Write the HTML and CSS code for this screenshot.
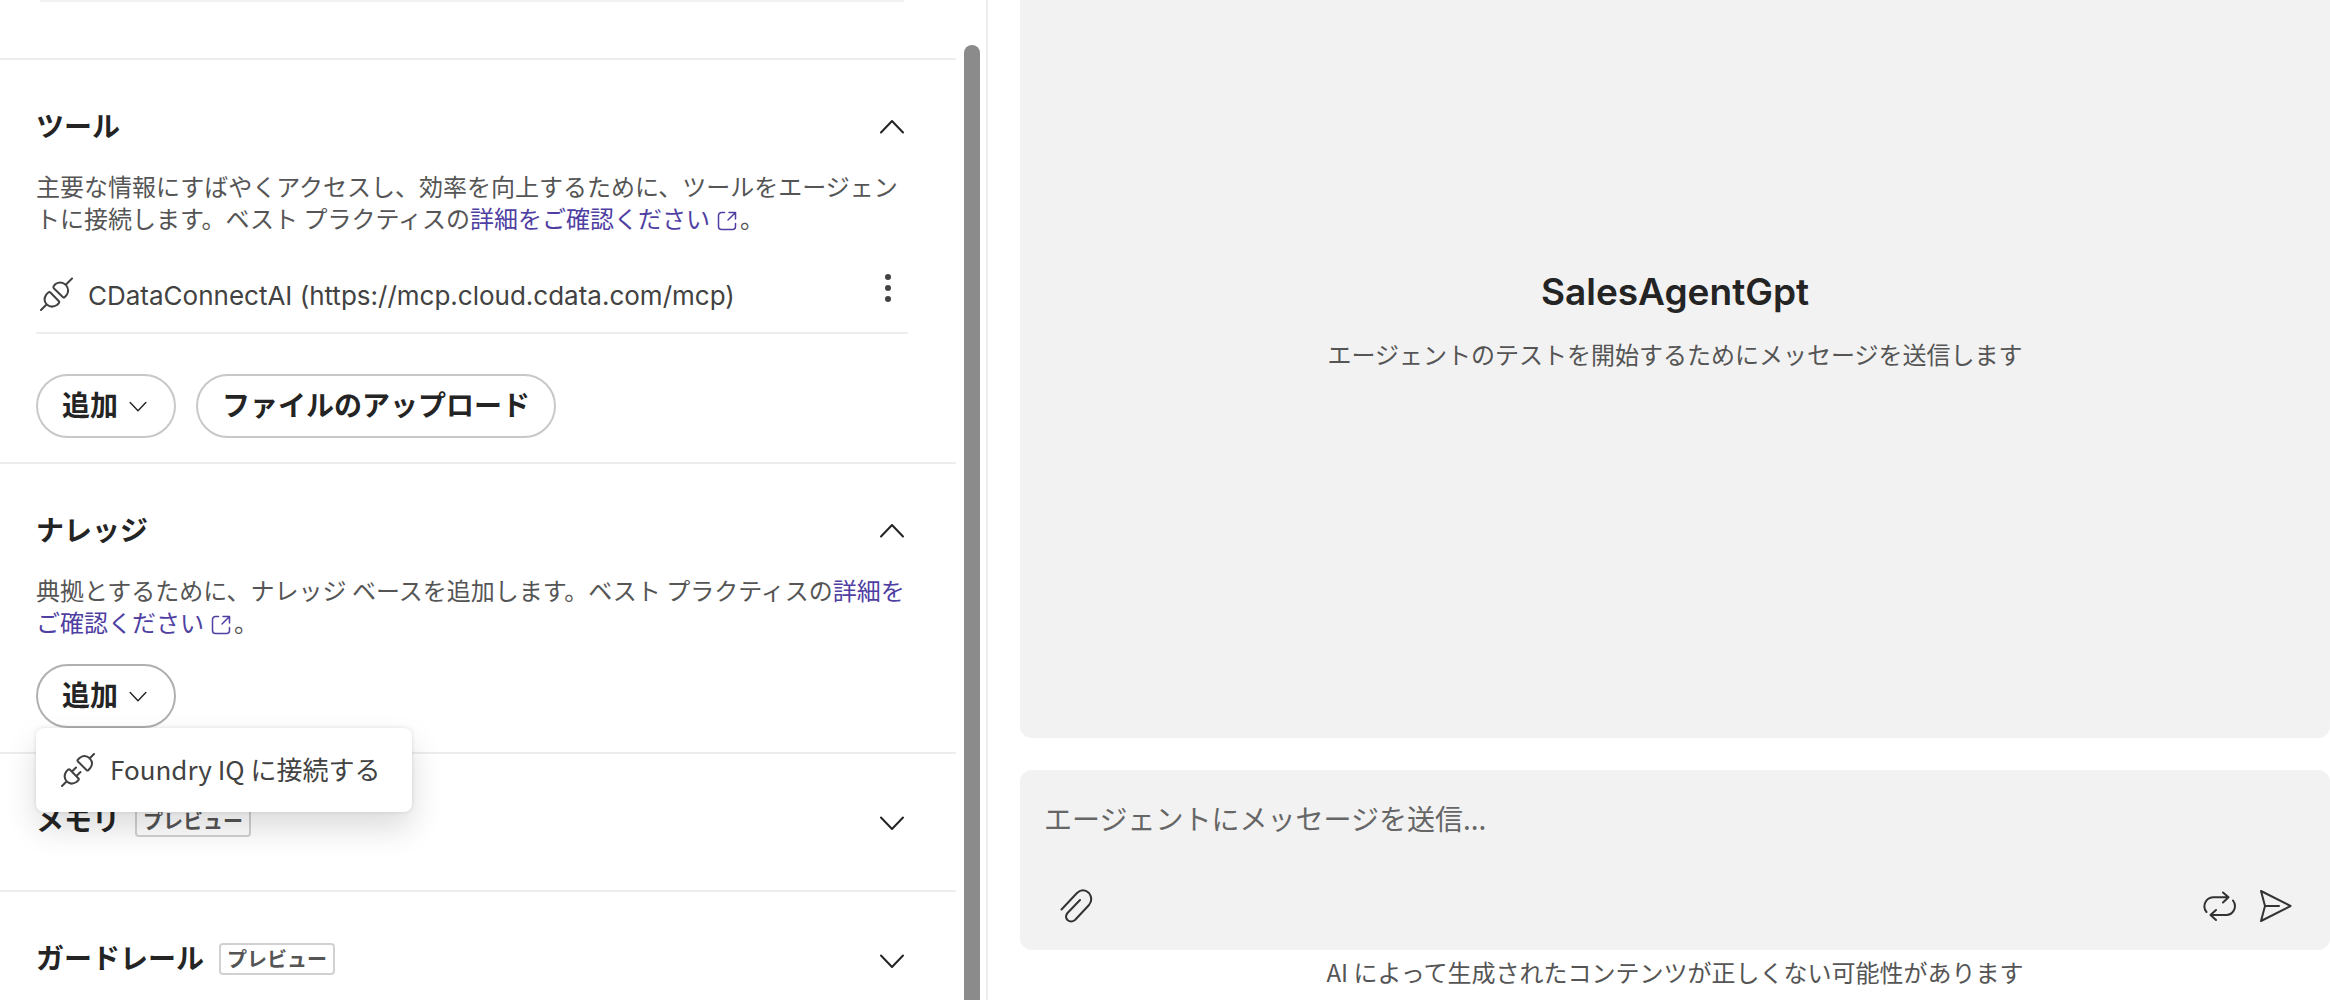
FILE: index.html
```html
<!DOCTYPE html>
<html lang="ja">
<head>
<meta charset="utf-8">
<title>SalesAgentGpt</title>
<link rel="stylesheet" href="styles.css">
</head>
<body>
<svg class="sprite" aria-hidden="true">
  <symbol id="chevron-up" viewBox="0 0 28 28"><path d="M3 19.500 14 8 25 19.500"/></symbol>
  <symbol id="chevron-down" viewBox="0 0 28 28"><path d="M3 10.500 14 22 25 10.500"/></symbol>
  <symbol id="open" viewBox="0 0 20 20"><path d="M7.500 1.500H4.500a3 3 0 0 0-3 3v11a3 3 0 0 0 3 3h11a3 3 0 0 0 3-3V12.500M12 1.500h6.500V8M18.500 1.500 11 9"/></symbol>
  <symbol id="plug-on" viewBox="0 0 34 34"><path d="M1 33 6 28M32 1.500 26.500 7M14 11.500 22.800 20Q23.800 21 24.800 20L26.500 18.300Q30 13 26 8Q21 3.500 15.500 7L13.900 8.800Q12.900 10.200 14 11.500ZM10.400 15.500 18.700 24Q19.700 25 18.700 26.200L17 28Q11.500 31.500 6.800 27.500Q2.500 23 6.400 17.400L8.200 15.600Q9.300 14.500 10.400 15.500Z"/></symbol>
  <symbol id="plug-off" viewBox="0 0 34 34"><path d="M1 33 5.500 28.500M33 1 28.500 5.500M17 8.500 25.500 17Q26.500 18 27.500 17L29.300 15Q33 10 28.800 5.300Q24 1 18.900 4.700L17 6.500Q16 7.500 17 8.500ZM9 16.800 17.300 25.200Q18.300 26.200 17.300 27.200L15.500 29Q10 32.500 5.800 28.500Q1.800 24 5.200 18.600L7 16.800Q8 15.800 9 16.800ZM11 18.500 15 14.500M15.500 23 19.500 19"/></symbol>
  <symbol id="clip" viewBox="0 0 36 36"><path d="M3.500 21.500 19 5Q25-.500 31 5Q35.500 11 31 17L17 32Q13 35 9.500 32Q6.500 28.500 9.500 25L22 12"/></symbol>
  <symbol id="repeat" viewBox="0 0 36 36"><path d="M4.500 24A9 9 0 0 1 11 9.300H26M21 4.500 26.500 9.300 21 14.500M31 12.500A9 9 0 0 1 25 27H9M14 22 8.500 27 14 32"/></symbol>
  <symbol id="send" viewBox="0 0 36 36"><path d="M3 3 32.500 18 3 33 7 18ZM7 18H21"/></symbol>
</svg>

<div class="app">
  <main class="setup">
    <div class="setup-body">
      <div class="previous"></div>

      <section class="section">
        <header class="section-head">
          <h2>ツール</h2>
          <button class="icon-button" type="button" aria-label="折りたたむ"><svg class="icon-md"><use href="#chevron-up"/></svg></button>
        </header>
        <p class="description">主要な情報にすばやくアクセスし、効率を向上するために、ツールをエージェントに接続します。ベスト プラクティスの<a href="#tools">詳細をご確認ください<svg class="icon-open"><use href="#open"/></svg></a>。</p>
        <div class="tool">
          <svg class="icon-lg"><use href="#plug-on"/></svg>
          <span class="tool-name">CDataConnectAI (https://mcp.cloud.cdata.com/mcp)</span>
          <button class="icon-button more" type="button" aria-label="その他"><span></span><span></span><span></span></button>
        </div>
        <div class="actions">
          <button class="pill" type="button">追加<svg class="icon-sm"><use href="#chevron-down"/></svg></button>
          <button class="pill" type="button">ファイルのアップロード</button>
        </div>
      </section>

      <section class="section">
        <header class="section-head">
          <h2>ナレッジ</h2>
          <button class="icon-button" type="button" aria-label="折りたたむ"><svg class="icon-md"><use href="#chevron-up"/></svg></button>
        </header>
        <p class="description">典拠とするために、ナレッジ ベースを追加します。ベスト プラクティスの<a href="#knowledge">詳細をご確認ください<svg class="icon-open"><use href="#open"/></svg></a>。</p>
        <div class="actions compact">
          <div class="dropdown">
            <button class="pill open" type="button" aria-expanded="true">追加<svg class="icon-sm"><use href="#chevron-down"/></svg></button>
            <div class="menu" role="menu">
              <button class="menu-item" type="button" role="menuitem"><svg class="icon-lg"><use href="#plug-off"/></svg><span>Foundry IQ に接続する</span></button>
            </div>
          </div>
        </div>
      </section>

      <section class="section">
        <header class="section-head">
          <h2>メモリ</h2><span class="badge">プレビュー</span>
          <button class="icon-button" type="button" aria-label="展開する"><svg class="icon-md"><use href="#chevron-down"/></svg></button>
        </header>
      </section>

      <section class="section">
        <header class="section-head">
          <h2>ガードレール</h2><span class="badge">プレビュー</span>
          <button class="icon-button" type="button" aria-label="展開する"><svg class="icon-md"><use href="#chevron-down"/></svg></button>
        </header>
      </section>
    </div>
    <div class="scroll-thumb"></div>
  </main>

  <aside class="chat">
    <div class="conversation">
      <h1>SalesAgentGpt</h1>
      <p>エージェントのテストを開始するためにメッセージを送信します</p>
    </div>
    <form class="composer">
      <textarea rows="1" aria-label="メッセージ" placeholder="エージェントにメッセージを送信..."></textarea>
      <div class="composer-tools">
        <button class="icon-button attach" type="button" aria-label="添付"><svg class="icon-xl"><use href="#clip"/></svg></button>
        <button class="icon-button" type="button" aria-label="再試行"><svg class="icon-xl"><use href="#repeat"/></svg></button>
        <button class="icon-button" type="submit" aria-label="送信"><svg class="icon-xl"><use href="#send"/></svg></button>
      </div>
    </form>
    <p class="notice">AI によって生成されたコンテンツが正しくない可能性があります</p>
  </aside>
</div>
</body>
</html>
```
FILE: styles.css
```css
* {
  box-sizing: border-box;
}

body {
  margin: 0;
  background: #fff;
  color: #242424;
  font-family: "Noto Sans CJK JP", sans-serif;
  font-size: 28px;
}

h1,
h2,
p {
  margin: 0;
}

button,
textarea {
  font: inherit;
  color: inherit;
}

svg {
  display: block;
  flex: none;
  fill: none;
  stroke: currentColor;
  stroke-width: 2;
  stroke-linecap: round;
  stroke-linejoin: round;
}

.sprite {
  position: absolute;
  width: 0;
  height: 0;
}

.app {
  display: grid;
  grid-template-columns: 988fr 1342fr;
  height: 100vh;
  overflow: hidden;
}

/* Setup column */

.setup {
  display: flex;
  min-width: 0;
  overflow: hidden;
  padding-right: 6px;
  border-right: 2px solid #ededed;
}

.setup-body {
  flex: 1;
  min-width: 0;
}

.scroll-thumb {
  flex: none;
  width: 16px;
  margin: 45px 0 -16px 8px;
  border-radius: 8px;
  background: #8b8b8b;
}

.previous {
  height: 58px;
  margin: 0 52px 0 40px;
  border-top: 2px solid #f2f2f2;
}

.section {
  padding: 0 40px 0 36px;
  border-top: 2px solid #ededed;
}

.section-head {
  display: flex;
  align-items: center;
  height: 136px;
  padding: 0 10px 3px 0;
}

.section-head h2 {
  padding-bottom: 3px;
  font-size: 28px;
  line-height: 40px;
  font-weight: 700;
}

.section-head .icon-button {
  margin-left: auto;
}

.badge {
  margin-left: 15px;
  padding: 0 6px;
  border: 2px solid #d1d1d1;
  border-radius: 4px;
  color: #555;
  font-size: 20px;
  line-height: 28px;
  font-weight: 600;
}

.description {
  margin-top: -26px;
  color: #555;
  font-size: 24px;
  line-height: 32px;
}

.description a {
  color: #4f3fa3;
  text-decoration: none;
}

.icon-open {
  display: inline-block;
  width: 20px;
  height: 20px;
  margin: 0 3px 0 7px;
  vertical-align: -3px;
  stroke-width: 1.5;
}

.icon-button {
  display: flex;
  padding: 0;
  border: 0;
  background: none;
}

.icon-sm {
  width: 20px;
  height: 20px;
  margin: 2px 2px 0 0;
}

.icon-md {
  width: 28px;
  height: 28px;
}

.icon-lg {
  width: 34px;
  height: 34px;
}

.icon-xl {
  width: 36px;
  height: 36px;
}

.tool {
  display: flex;
  align-items: center;
  height: 78px;
  margin: 22px 8px 0 0;
  padding: 0 17px 0 4px;
  border-bottom: 2px solid #ededed;
  color: #424242;
}

.tool-name {
  flex: 1;
  margin-left: 14px;
  padding-top: 4px;
  font-family: Inter, sans-serif;
  font-size: 26px;
  line-height: 36px;
}

.more {
  flex-direction: column;
  gap: 5px;
  margin-bottom: 12px;
}

.more span {
  width: 6px;
  height: 6px;
  border-radius: 50%;
  background: #424242;
}

.actions {
  display: flex;
  gap: 20px;
  padding: 40px 0 24px;
}

.actions.compact {
  padding-top: 26px;
}

.pill {
  display: flex;
  align-items: center;
  gap: 10px;
  height: 64px;
  padding: 0 24px 4px;
  border: 2px solid #c8c8c8;
  border-radius: 32px;
  background: #fff;
  font-weight: 700;
}

.pill.open {
  border-color: #b0b0b0;
}

.dropdown {
  position: relative;
}

.menu {
  position: absolute;
  top: 100%;
  left: 0;
  padding: 8px;
  border-radius: 8px;
  background: #fff;
  box-shadow: 0 0 4px rgba(0, 0, 0, 0.12), 0 16px 32px rgba(0, 0, 0, 0.14);
}

.menu-item {
  display: flex;
  align-items: center;
  gap: 15px;
  height: 68px;
  padding: 0 24px 0 17px;
  border: 0;
  background: none;
  color: #424242;
  font-size: 26px;
  white-space: nowrap;
}

.menu-item span {
  padding-bottom: 4px;
}

/* Chat column */

.chat {
  display: flex;
  flex-direction: column;
  min-width: 0;
  padding-left: 32px;
}

.conversation {
  display: flex;
  flex: 1;
  flex-direction: column;
  align-items: center;
  justify-content: center;
  gap: 20px;
  padding-bottom: 103px;
  border-radius: 0 0 12px 12px;
  background: #f2f2f2;
}

.conversation h1 {
  font-family: Inter, sans-serif;
  font-size: 37px;
  line-height: 52px;
  font-weight: 600;
}

.conversation p {
  color: #555;
  font-size: 24px;
  line-height: 32px;
}

.composer {
  margin-top: 32px;
  padding: 26px 36px 26px 24px;
  border-radius: 12px;
  background: #f2f2f2;
}

.composer textarea {
  display: block;
  width: 100%;
  height: 44px;
  padding: 0;
  border: 0;
  outline: 0;
  background: none;
  line-height: 44px;
  resize: none;
  overflow: hidden;
}

.composer textarea::placeholder {
  color: #666;
  opacity: 1;
}

.composer-tools {
  display: flex;
  gap: 20px;
  margin-top: 48px;
  color: #333;
}

.attach {
  margin: 0 auto 0 14px;
}

.notice {
  height: 50px;
  color: #555;
  font-size: 24px;
  line-height: 44px;
  text-align: center;
}
```
